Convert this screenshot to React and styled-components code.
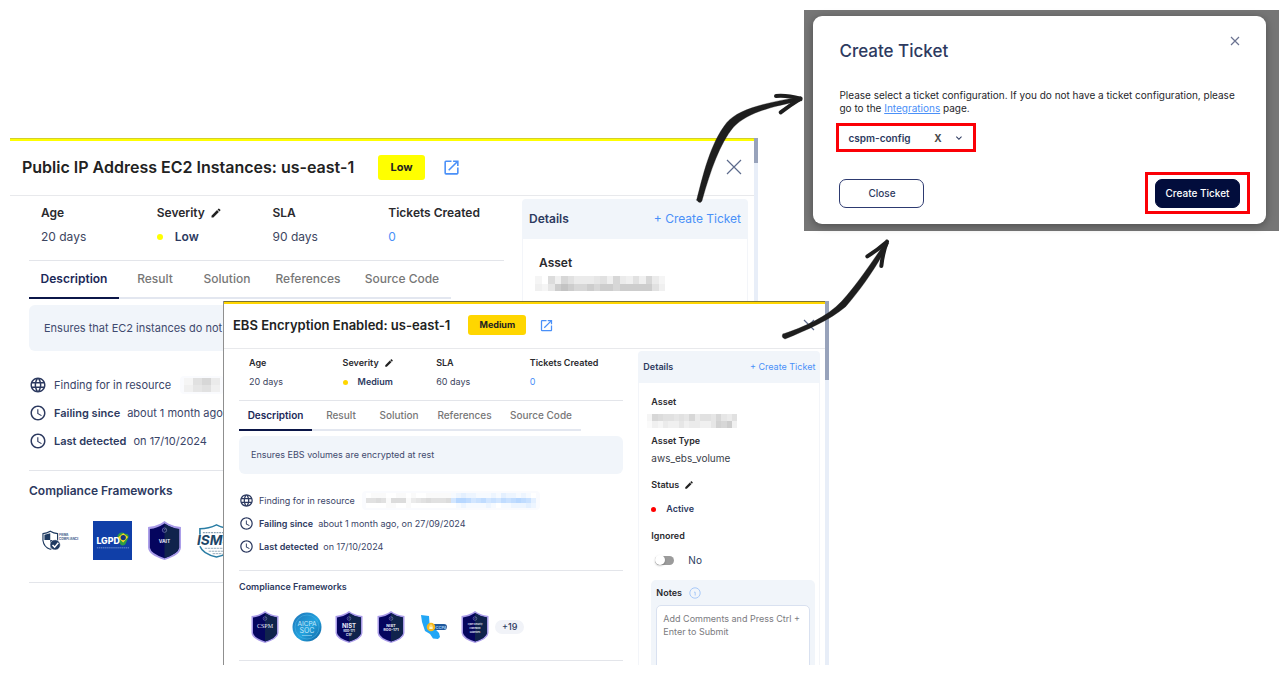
import React from "react";
import styled, { createGlobalStyle, ThemeProvider } from "styled-components";
import { MdOpenInNew, MdEdit, MdLanguage, MdAccessTime, MdKeyboardArrowDown } from "react-icons/md";

const GlobalStyle = createGlobalStyle`
  *, *::before, *::after { box-sizing: border-box; }
  body {
    margin: 0;
    background: #fff;
    font-family: Inter, "Open Sans", sans-serif;
    color: #2d3a60;
  }
  button, input, select, textarea { font: inherit; color: inherit; }
  h1, h2, h3, p, dl, dd, dt, ul { margin: 0; padding: 0; }
`;

const large = {
  accent: "#ffff00", edge: "#d3cf2c", outline: "0",
  title: 16, text: 12, tab: 12, body: 11, badge: 11, line: 16,
  header: 54, headerPad: 12, headerGap: 24, badgeW: 47, badgeH: 25, linkGap: 17, openIcon: 19, close: 16, closePad: 12,
  pad: 19, gap: 18, side: 226, scrollGap: 6, thumb: 25,
  statTop: 9, statGap: 8, statBottom: 15, inset: 12, edit: 12, dot: 6, dotGap: 12,
  tabs: "90px 72px 72px 90px 98px", tabH: 38,
  boxTop: 6, boxH: 46, boxPad: 15,
  rowsTop: 20, rowH: 28, icon: 18, rowGap: 7, rowsBottom: 15,
  fwTop: 12, fwGap: 22, logo: 39, logoGap: 13, fwBottom: 22,
  sideTop: 3, sideHead: 40, sidePad: 7, bodyTop: 16, bodyPad: 16,
};

const small = {
  accent: "#ffd600", edge: "#7c7434", outline: "1px solid #8f8f8f",
  title: 13, text: 9, tab: 10, body: 9, badge: 9, line: 14,
  header: 44, headerPad: 9, headerGap: 18, badgeW: 58, badgeH: 20, linkGap: 13, openIcon: 15, close: 12, closePad: 10,
  pad: 15, gap: 15, side: 182, scrollGap: 5, thumb: 79,
  statTop: 7, statGap: 5, statBottom: 11, inset: 10, edit: 10, dot: 5, dotGap: 10,
  tabs: "73px 58px 58px 73px 80px", tabH: 30,
  boxTop: 5, boxH: 38, boxPad: 12,
  rowsTop: 15, rowH: 23, icon: 15, rowGap: 5, rowsBottom: 12,
  fwTop: 9, fwGap: 17, logo: 32, logoGap: 10, fwBottom: 17,
  sideTop: 2, sideHead: 32, sidePad: 5, bodyTop: 12, bodyPad: 12,
};

const px = (key) => ({ theme }) => `${theme[key]}px`;

const Canvas = styled.main`
  position: relative;
  min-height: 100vh;
  overflow: hidden;
`;

const Panel = styled.article`
  position: absolute;
  display: flex;
  overflow: hidden;
  background: #fff;
  border-left: ${({ theme }) => theme.outline};
  font-size: ${px("text")};
  line-height: ${px("line")};
`;
const BackPanel = styled(Panel)`
  left: 10px;
  top: 138px;
  width: calc(58% + 1px);
`;
const FrontPanel = styled(Panel)`
  left: 223px;
  top: 301px;
  bottom: 9px;
  width: calc(47% + 1px);
`;
const PanelMain = styled.div`
  flex: 1;
  min-width: 0;
  border-top: 1px solid ${({ theme }) => theme.edge};
`;
const ScrollTrack = styled.div`
  flex: none;
  width: 4px;
  background: #e8eef8;
`;
const ScrollThumb = styled.div`
  height: ${px("thumb")};
  background: #98a3bb;
`;

const Header = styled.header`
  display: flex;
  align-items: center;
  border-top: 2px solid ${({ theme }) => theme.accent};
  border-bottom: 1px solid #e8e9ec;
  height: ${({ theme }) => theme.header + 3}px;
  padding: 0 ${px("closePad")} 2px ${px("headerPad")};
`;
const Title = styled.h1`
  font-size: ${px("title")};
  font-weight: 600;
  color: #222;
  white-space: nowrap;
`;
const Badge = styled.span`
  display: grid;
  place-items: center;
  margin-left: ${px("headerGap")};
  width: ${px("badgeW")};
  height: ${px("badgeH")};
  border-radius: 3px;
  background: ${({ theme }) => theme.accent};
  color: #222;
  font-size: ${px("badge")};
  font-weight: 700;
`;
const OpenLink = styled.a`
  display: flex;
  margin-left: ${px("linkGap")};
  margin-right: auto;
  color: #4a90f8;
  font-size: ${px("openIcon")};
`;
const IconButton = styled.button`
  display: flex;
  padding: 0;
  border: 0;
  background: none;
  color: ${({ $color }) => $color || "#222"};
`;

const Body = styled.div`
  display: flex;
  align-items: flex-start;
  gap: ${px("gap")};
  padding: 0 ${px("scrollGap")} 0 ${px("pad")};
`;
const Column = styled.div`
  flex: 1;
  min-width: 0;
`;

const Stats = styled.dl`
  display: grid;
  grid-template-columns: repeat(4, 1fr);
  padding: ${px("statTop")} 0 ${px("statBottom")} ${px("inset")};
  border-bottom: 1px solid #e3e5ea;
`;
const Label = styled.dt`
  display: flex;
  align-items: center;
  gap: 5px;
  height: ${px("line")};
  font-size: ${px("text")};
  font-weight: 600;
  color: #2a2a2e;
  white-space: nowrap;
`;
const EditButton = styled(IconButton)`
  font-size: ${px("edit")};
`;
const Value = styled.dd`
  display: flex;
  align-items: center;
  gap: ${px("dotGap")};
  margin-top: ${px("statGap")};
  color: ${({ $strong }) => ($strong ? "#2d3a60" : "#3c4560")};
  font-weight: ${({ $strong }) => ($strong ? 600 : 400)};
`;
const PlainValue = styled.dd`
  font-size: ${px("tab")};
  color: #3a3d48;
`;
const Dot = styled.span`
  width: ${px("dot")};
  height: ${px("dot")};
  border-radius: 50%;
  background: ${({ $color }) => $color};
`;
const CountLink = styled.a`
  color: #4a90f8;
  text-decoration: none;
`;

const Tabs = styled.nav`
  display: grid;
  grid-template-columns: ${({ theme }) => theme.tabs};
  height: ${px("tabH")};
`;
const Tab = styled.button`
  padding: 0;
  border: 0;
  border-bottom: 2px solid ${({ $active }) => ($active ? "#0b1648" : "#e3e7f0")};
  background: none;
  color: ${({ $active }) => ($active ? "#1b2858" : "#777")};
  font-size: ${px("tab")};
  font-weight: ${({ $active }) => ($active ? 600 : 500)};
  white-space: nowrap;
`;
const Summary = styled.p`
  display: flex;
  align-items: center;
  margin-top: ${px("boxTop")};
  height: ${px("boxH")};
  padding-left: ${px("boxPad")};
  border-radius: 6px;
  background: #f1f5fa;
  color: #3f4a6e;
  font-size: ${px("body")};
  white-space: nowrap;
`;
const Facts = styled.ul`
  list-style: none;
  margin-top: ${px("rowsTop")};
  padding-bottom: ${px("rowsBottom")};
  border-bottom: 1px solid #e3e5ea;
`;
const Fact = styled.li`
  display: flex;
  align-items: center;
  gap: ${px("rowGap")};
  height: ${px("rowH")};
  color: #3a4568;
  font-size: ${px("body")};
  white-space: nowrap;
  > svg { flex: none; font-size: ${px("icon")}; color: #2d3a60; }
  b { font-weight: 600; color: #2d3a60; }
`;
const Resource = styled.span`
  display: flex;
  align-items: center;
  margin-left: 2px;
  padding: 2px 4px;
  border-radius: 4px;
  background: #fafbfe;
`;

const Frameworks = styled.section`
  padding: ${px("fwTop")} 0 ${px("fwBottom")};
  border-bottom: 1px solid #e3e5ea;
`;
const SectionTitle = styled.h2`
  font-size: ${px("text")};
  line-height: ${px("line")};
  font-weight: 600;
`;
const Logos = styled.div`
  display: flex;
  align-items: center;
  gap: ${px("logoGap")};
  margin-top: ${px("fwGap")};
  padding-left: ${px("inset")};
  svg { flex: none; width: ${px("logo")}; height: ${px("logo")}; }
`;
const More = styled.span`
  margin-left: -6px;
  padding: 0 7px;
  border-radius: 7px;
  background: #f1f3f8;
  font-size: ${px("body")};
  font-weight: 500;
`;

const Side = styled.aside`
  flex: none;
  width: ${px("side")};
  margin-top: ${px("sideTop")};
`;
const SideHead = styled.div`
  display: flex;
  align-items: center;
  justify-content: space-between;
  height: ${px("sideHead")};
  padding: 0 ${px("sidePad")};
  border-radius: 4px 4px 0 0;
  background: #f1f5fa;
`;
const TextButton = styled.button`
  padding: 0;
  border: 0;
  background: none;
  color: #4a90f8;
`;
const SideBody = styled.div`
  display: flex;
  flex-direction: column;
  gap: 13px;
  min-height: 340px;
  padding: ${px("bodyTop")} 4px 0 ${px("bodyPad")};
  border: solid #f3f5f9;
  border-width: 0 1px;
`;
const FieldGroup = styled.dl`
  display: flex;
  flex-direction: column;
  gap: 6px;
`;
const Field = styled.div`
  display: flex;
  flex-direction: column;
  gap: ${({ $gap }) => $gap}px;
`;
const Hidden = styled.dd`
  display: flex;
  svg { margin-left: -4px; }
`;
const SwitchLabel = styled.label`
  display: flex;
  align-items: center;
  gap: 14px;
  font-size: 10px;
`;
const Switch = styled.input`
  appearance: none;
  display: flex;
  align-items: center;
  margin: 0 0 0 4px;
  width: 19px;
  height: 9px;
  border-radius: 5px;
  background: #9b9b9b;
  &::before {
    content: "";
    width: 10px;
    height: 10px;
    border-radius: 50%;
    background: #fff;
    box-shadow: 0 1px 2px rgba(0, 0, 0, 0.25);
  }
`;
const Notes = styled.div`
  padding: 5px 5px 0;
  border-radius: 5px;
  background: #f1f5fa;
`;
const NotesHead = styled.div`
  display: flex;
  align-items: center;
  gap: 7px;
  height: 15px;
  color: #2a2a2e;
  font-weight: 600;
`;
const NotesInput = styled.textarea`
  display: block;
  margin-top: 5px;
  width: 100%;
  height: 90px;
  padding: 6px;
  border: 1px solid #d9e1f0;
  border-radius: 5px;
  background: #fff;
  font-size: 9px;
  line-height: 13px;
  resize: none;
  outline: 0;
  &::placeholder { color: #7b7b80; opacity: 1; }
`;

const Backdrop = styled.section`
  position: absolute;
  top: 10px;
  right: 9px;
  width: calc(37% - 2px);
  padding: 6px 13px 7px 9px;
  background: #767676;
`;
const Dialog = styled.div`
  padding: 20px 26px 10px;
  border-radius: 9px;
  background: #fff;
  box-shadow: 0 2px 8px rgba(0, 0, 0, 0.35);
`;
const DialogHead = styled.div`
  display: flex;
  align-items: flex-start;
  justify-content: space-between;
`;
const DialogTitle = styled.h2`
  padding-top: 4px;
  font-size: 17px;
  line-height: 22px;
  font-weight: 500;
`;
const DialogText = styled.p`
  margin-top: 27px;
  color: #26262b;
  font-size: 10px;
  line-height: 13px;
  a { color: #4a90f8; }
`;
const Picker = styled.div`
  display: flex;
  align-items: center;
  width: 140px;
  height: 29px;
  margin: 8px 0 0 -3px;
  padding: 0 9px;
  border: 3px solid #fb0006;
  color: #2d3a60;
`;
const Select = styled.select`
  appearance: none;
  width: 87px;
  padding: 0;
  border: 0;
  background: none;
  outline: 0;
  font-size: 10px;
  font-weight: 600;
`;
const ClearButton = styled.button`
  margin-right: 11px;
  padding: 0;
  border: 0;
  background: none;
  color: #4a4a4a;
  font-size: 10px;
  font-weight: 700;
`;
const Actions = styled.div`
  display: flex;
  align-items: center;
  justify-content: space-between;
  height: 42px;
  margin: 20px -10px 0 0;
`;
const Action = styled.button`
  width: 85px;
  height: 29px;
  padding: 0;
  border: 1px solid ${({ $primary }) => ($primary ? "#020d3c" : "#2d3a70")};
  border-radius: 7px;
  background: ${({ $primary }) => ($primary ? "#020d3c" : "#fff")};
  color: ${({ $primary }) => ($primary ? "#fff" : "#2d3a60")};
  font-size: 10px;
  font-weight: 500;
`;
const Highlight = styled.div`
  display: grid;
  place-items: center;
  width: 105px;
  height: 42px;
  border: 3px solid #fb0006;
`;
const Arrows = styled.svg`
  position: absolute;
  left: 680px;
  top: 80px;
  width: 230px;
  height: 270px;
  pointer-events: none;
`;

function Cross({ size, stroke = 1.2 }) {
  return (
    <svg width={size} height={size} viewBox={`0 0 ${size} ${size}`} fill="none" stroke="currentColor" strokeWidth={stroke}>
      <path d={`M1 1 L${size - 1} ${size - 1} M${size - 1} 1 L1 ${size - 1}`} />
    </svg>
  );
}

/* Pixelated redaction: each hex digit is the darkness of one cell. */
function Mosaic({ rows, cw, ch, blueFrom = Infinity }) {
  const cols = rows[0].length;
  return (
    <svg width={Math.round(cols * cw)} height={Math.round(rows.length * ch)} shapeRendering="crispEdges" aria-hidden="true">
      {rows.map((row, y) =>
        [...row].map((c, x) => {
          const d = parseInt(c, 16);
          const v = 255 - d * 5;
          const fill = x >= blueFrom ? `rgb(${255 - d * 9},${255 - d * 5},255)` : `rgb(${v},${v},${v})`;
          return <rect key={`${x}-${y}`} x={x * cw} y={y * ch} width={cw} height={ch} fill={fill} />;
        })
      )}
    </svg>
  );
}

function Shield({ lines, serif }) {
  return (
    <svg viewBox="0 0 32 32">
      <path d="M16 0 L19 2 Q24 4.500 29.500 5 L29.500 22 Q29 28 16 32 Q3 28 2.500 22 L2.500 5 Q8 4.500 13 2 Z" fill="#a99be8" />
      <path d="M16 2 Q22 6 28 6.500 L28 22 Q27 27 16 30.500 Q5 27 4 22 L4 6.500 Q10 6 16 2 Z" fill="#05055e" />
      <path d="M16 2 Q22 6 28 6.500 L28 22 Q27 27 16 30.500 Z" fill="#10234c" />
      <circle cx="16" cy="7.500" r="1.800" fill="none" stroke="#8f93c4" strokeWidth="0.500" />
      <path d="M15.300 7.500 L16.800 6.700" stroke="#8f93c4" strokeWidth="0.500" />
      {lines.map(([text, size, y]) => (
        <text key={text + y} x="16" y={y} fontSize={size} fill="#e6e8f6" fontWeight={serif ? 400 : 700} textAnchor="middle" fontFamily={serif ? "Liberation Serif, serif" : "Inter, sans-serif"}>
          {text}
        </text>
      ))}
    </svg>
  );
}

const PrivacyLogo = () => (
  <svg viewBox="0 0 40 40">
    <path d="M2 13 Q6 12.500 9.500 10.500 Q13 12.500 17 13 L17 20 Q16 27 9.500 29 Q3 27 2 20 Z" fill="#fff" stroke="#1e3a60" strokeWidth="1.200" />
    <path d="M3.500 14 L9.500 12.500 L9.500 19.500 L3.500 19.500 Z M9.500 19.500 L15.500 19.500 Q14.500 26 9.500 27.500 Z" fill="#1e3a60" />
    <circle cx="14.500" cy="24.500" r="5.300" fill="#1e3a60" stroke="#fff" strokeWidth="0.600" />
    <path d="M11.800 24.500 L14 26.800 L17.800 22.300" fill="none" stroke="#fff" strokeWidth="1.500" />
    <text x="18.500" y="15.500" fontSize="3" fontWeight="700" fill="#45608a">PRIMA</text>
    <text x="18.500" y="19" fontSize="3" fontWeight="700" fill="#45608a">COMPLIANCE</text>
  </svg>
);

const LgpdLogo = () => (
  <svg viewBox="0 0 40 40">
    <rect width="40" height="40" fill="#103fa8" />
    <path d="M25 15 Q28 10 33 13 Q38 13 36 18 L33 24 Q29 27 27 22 Z" fill="#2f9e44" />
    <path d="M25.500 17 L31 12.500 L36 16.500 L31 22 Z" fill="#ffd91f" />
    <circle cx="31" cy="17" r="2.700" fill="#14377d" />
    <text x="3.500" y="24" fontSize="9" fontWeight="800" fill="#fff">LGPD</text>
    <path d="M4 27.500 H37" stroke="#7f9bd6" strokeWidth="0.900" strokeDasharray="1.500 0.600" />
  </svg>
);

const IsmsLogo = () => (
  <svg viewBox="0 0 40 40">
    <path d="M3 14 L3 8 Q12 8 20 4 Q28 8 37 8 L37 14 M3 26 Q6 34 20 37 Q34 34 37 26" fill="none" stroke="#2b7ea5" strokeWidth="1.600" />
    <path d="M6 12 H34" stroke="#8aa3b5" strokeWidth="1.200" strokeDasharray="2 0.800" />
    <text x="0" y="25" fontSize="14" fontWeight="700" fontStyle="italic" fill="#1d4668">ISMS</text>
    <path d="M8 28 H33 M12 31 H30 M16 33.500 H26" stroke="#8aa3b5" strokeWidth="0.900" strokeDasharray="2.500 0.600" />
  </svg>
);

const SocLogo = () => (
  <svg viewBox="0 0 32 32">
    <defs>
      <linearGradient id="soc" x1="0" y1="0" x2="1" y2="1">
        <stop offset="0" stopColor="#1f74b8" />
        <stop offset="0.550" stopColor="#23a3de" />
        <stop offset="1" stopColor="#0f5c9c" />
      </linearGradient>
    </defs>
    <circle cx="16" cy="16" r="14.500" fill="url(#soc)" />
    <circle cx="16" cy="16" r="12" fill="none" stroke="#4fb6e6" strokeWidth="0.500" />
    <text x="16" y="14.500" fontSize="6.500" fill="#c5e8fa" textAnchor="middle">AICPA</text>
    <text x="16" y="22" fontSize="7" fill="#c5e8fa" textAnchor="middle">SOC</text>
    <path d="M11 24.500 H21" stroke="#a8dcf5" strokeWidth="0.600" />
  </svg>
);

const CcpaLogo = () => (
  <svg viewBox="0 0 32 32">
    <path d="M4 4 L12 5 L12.500 12 L22 22 L23 26 L21 28 L16 27.500 L13 23 L8 20 L5 11 Z" fill="#22a6f5" />
    <rect x="13" y="13" width="17" height="6" rx="3" fill="#20599c" />
    <circle cx="14" cy="16" r="4.300" fill="#f9b91c" />
    <path d="M12.300 15.500 H15.700 V18 H12.300 Z" fill="#fff3c4" />
    <path d="M13 15.500 V14.500 Q14 13 15 14.500 V15.500" fill="none" stroke="#fff3c4" strokeWidth="0.700" />
    <text x="18.500" y="17.500" fontSize="4" fontWeight="700" fill="#9cc6ee">CCPA</text>
  </svg>
);

const InfoIcon = () => (
  <svg width="12" height="12" viewBox="0 0 12 12" fill="none" stroke="#a9c9f8">
    <circle cx="6" cy="6" r="5.200" />
    <path d="M5 5.200 H6.200 V8.500" />
  </svg>
);

function Finding({ as: Frame, theme, title, level, sla, summary, resource, since, detected, logos, children }) {
  return (
    <ThemeProvider theme={theme}>
      <Frame>
        <PanelMain>
          <Header>
            <Title>{title}</Title>
            <Badge>{level}</Badge>
            <OpenLink href="#open" aria-label="Open finding"><MdOpenInNew /></OpenLink>
            <IconButton $color="#5c6a8c" aria-label="Close"><Cross size={theme.close} /></IconButton>
          </Header>
          <Body>
            <Column>
              <Stats>
                <div><Label>Age</Label><Value>20 days</Value></div>
                <div>
                  <Label>Severity <EditButton aria-label="Edit severity"><MdEdit /></EditButton></Label>
                  <Value $strong><Dot $color={theme.accent} />{level}</Value>
                </div>
                <div><Label>SLA</Label><Value>{sla}</Value></div>
                <div><Label>Tickets Created</Label><Value><CountLink href="#tickets">0</CountLink></Value></div>
              </Stats>
              <Tabs>
                {["Description", "Result", "Solution", "References", "Source Code"].map((name, i) => (
                  <Tab key={name} $active={i === 0}>{name}</Tab>
                ))}
              </Tabs>
              <Summary>{summary}</Summary>
              <Facts>
                <Fact><MdLanguage />Finding for in resource <Resource>{resource}</Resource></Fact>
                <Fact><MdAccessTime /><b>Failing since</b>{since}</Fact>
                <Fact><MdAccessTime /><b>Last detected</b>{detected}</Fact>
              </Facts>
              <Frameworks>
                <SectionTitle>Compliance Frameworks</SectionTitle>
                <Logos>{logos}</Logos>
              </Frameworks>
            </Column>
            <Side>
              <SideHead>
                <SectionTitle>Details</SectionTitle>
                <TextButton>+ Create Ticket</TextButton>
              </SideHead>
              <SideBody>{children}</SideBody>
            </Side>
          </Body>
        </PanelMain>
        <ScrollTrack><ScrollThumb /></ScrollTrack>
      </Frame>
    </ThemeProvider>
  );
}

function TicketDialog() {
  return (
    <Backdrop>
      <Dialog role="dialog" aria-labelledby="ticket-title">
        <DialogHead>
          <DialogTitle id="ticket-title">Create Ticket</DialogTitle>
          <IconButton $color="#6b7391" aria-label="Close dialog"><Cross size={10} /></IconButton>
        </DialogHead>
        <DialogText>
          Please select a ticket configuration. If you do not have a ticket configuration, please go to
          the <a href="#integrations">Integrations</a> page.
        </DialogText>
        <Picker>
          <Select aria-label="Ticket configuration" defaultValue="cspm-config">
            <option>cspm-config</option>
          </Select>
          <ClearButton aria-label="Clear selection">X</ClearButton>
          <MdKeyboardArrowDown size={12} />
        </Picker>
        <Actions>
          <Action>Close</Action>
          <Highlight><Action $primary>Create Ticket</Action></Highlight>
        </Actions>
      </Dialog>
    </Backdrop>
  );
}

export default function App() {
  return (
    <Canvas>
      <GlobalStyle />
      <Finding
        as={BackPanel}
        theme={large}
        title="Public IP Address EC2 Instances: us-east-1"
        level="Low"
        sla="90 days"
        summary="Ensures that EC2 instances do not"
        resource={<Mosaic rows={["2684", "3563"]} cw={9} ch={7} />}
        since="about 1 month ago"
        detected="on 17/10/2024"
        logos={<><PrivacyLogo /><LgpdLogo /><Shield lines={[["VAIT", 4, 18]]} /><IsmsLogo /></>}
      >
        <Field $gap={5}>
          <Label as="h3">Asset</Label>
          <Hidden as="div"><Mosaic rows={["20738644456384363842", "325aca88a8aa8aaaaa63"]} cw={6.5} ch={7.5} /></Hidden>
        </Field>
      </Finding>

      <Finding
        as={FrontPanel}
        theme={small}
        title="EBS Encryption Enabled: us-east-1"
        level="Medium"
        sla="60 days"
        summary="Ensures EBS volumes are encrypted at rest"
        resource={<Mosaic rows={["0111001101001111112322111213221210", "6676177714567666758875675657678763", "0000110010000000001211112101122232"]} cw={5} ch={5} blueFrom={17} />}
        since="about 1 month ago, on 27/09/2024"
        detected="on 17/10/2024"
        logos={
          <>
            <Shield serif lines={[["CSPM", 6, 17]]} />
            <SocLogo />
            <Shield lines={[["NIST", 6, 17], ["800-171", 3, 21], ["CSF", 3, 25]]} />
            <Shield lines={[["NIST", 4, 16], ["800-171", 4, 20]]} />
            <CcpaLogo />
            <Shield lines={[["Cyber Security", 2, 14], ["Framework", 2, 18], ["Guidelines", 2, 22]]} />
            <More>+19</More>
          </>
        }
      >
        <FieldGroup>
          <Field $gap={5}>
            <Label>Asset</Label>
            <Hidden><Mosaic rows={["28766565846658546", "132433534433598a3"]} cw={5.3} ch={7} /></Hidden>
          </Field>
          <Field $gap={3}>
            <Label>Asset Type</Label>
            <PlainValue>aws_ebs_volume</PlainValue>
          </Field>
        </FieldGroup>
        <Field $gap={5}>
          <Label as="h3">Status <EditButton aria-label="Edit status"><MdEdit /></EditButton></Label>
          <Value as="div" $strong><Dot $color="#ff0000" />Active</Value>
        </Field>
        <Field $gap={10}>
          <Label as="h3">Ignored</Label>
          <SwitchLabel><Switch type="checkbox" />No</SwitchLabel>
        </Field>
        <Notes>
          <NotesHead><label htmlFor="notes">Notes</label><InfoIcon /></NotesHead>
          <NotesInput id="notes" placeholder="Add Comments and Press Ctrl + Enter to Submit" />
        </Notes>
      </Finding>

      <TicketDialog />

      <Arrows viewBox="0 0 690 810" fill="#1e1e1e" stroke="#1e1e1e" strokeLinecap="round" strokeLinejoin="round" aria-hidden="true">
        <path d="M50 360 C68 290 90 190 140 128 C175 88 250 70 362 50 L366 62 C262 82 200 100 160 142 C120 190 92 270 66 362 Q60 374 50 360 Z" />
        <path d="M288 48 Q320 45 362 56 M302 97 Q330 76 362 56" fill="none" strokeWidth="12" />
        <path d="M309 762 C370 742 440 712 485 664 C530 615 580 540 618 484 L626 490 C590 560 545 625 497 680 C450 720 380 750 315 777 Q302 772 309 762 Z" />
        <path d="M562 529 Q595 508 621 485 M604 558 Q608 520 621 485" fill="none" strokeWidth="12" />
      </Arrows>
    </Canvas>
  );
}
